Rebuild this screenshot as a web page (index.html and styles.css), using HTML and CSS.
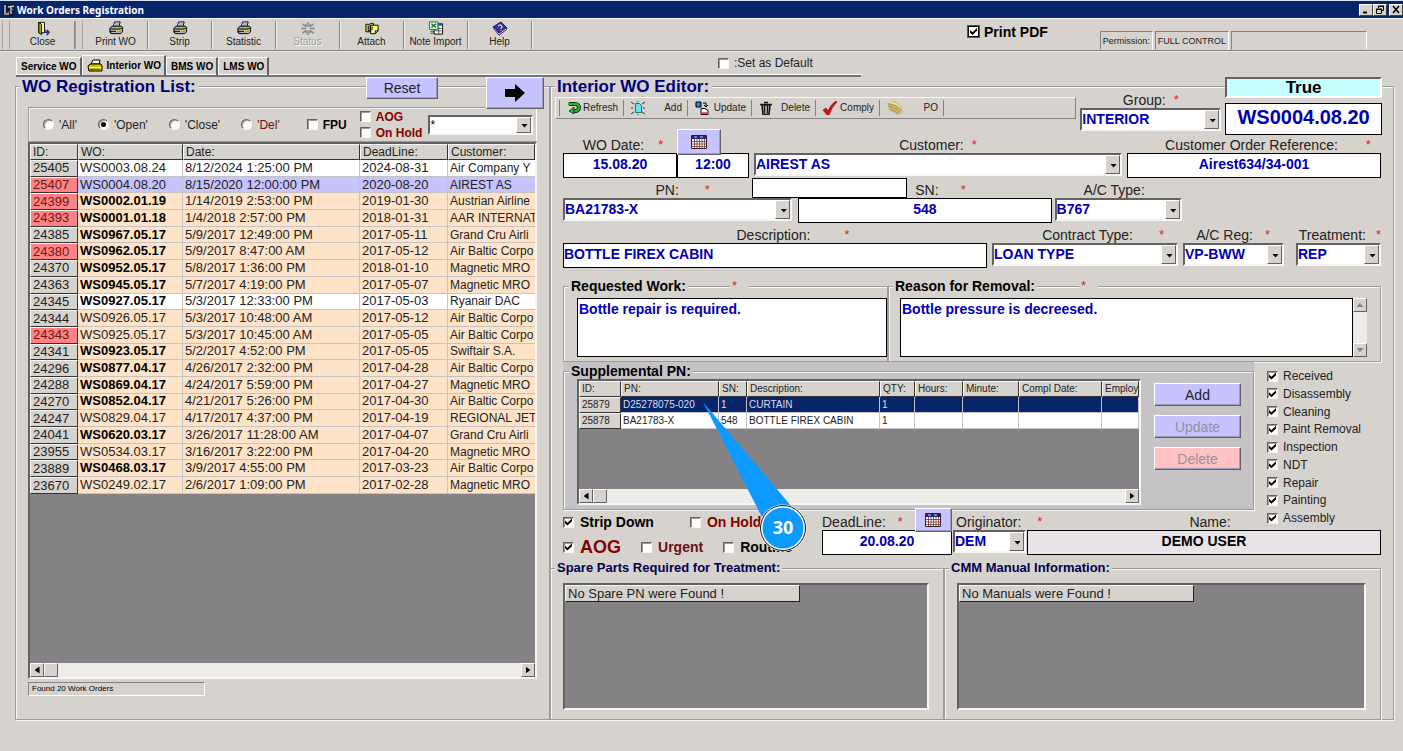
FILE: index.html
```html
<!DOCTYPE html>
<html lang="en">
<head>
<meta charset="utf-8">
<title>Work Orders Registration</title>
<link rel="stylesheet" href="styles.css">
</head>
<body>
<svg class="defs" aria-hidden="true">
  <symbol id="printer" viewBox="0 0 16 16"><path d="M5 6 6.500 1h6L11 6z" fill="#fff" stroke="#000"/><path d="M7 3h4M6.500 4.500h4" stroke="#555" stroke-width=".8"/><path d="M1.500 7.500 4 5.500h10l1 2v4l-2 2h-10l-1.500-1.500z" fill="#b5b2ad" stroke="#000"/><path d="M2 8.500h11l1.500-1.500M3 13.500 1.500 11h11" fill="none" stroke="#000"/><path d="M8 10h4v1.500H8z" fill="#ee0"/></symbol>
  <symbol id="calendar" viewBox="0 0 16 14"><path d="M.5.500h15v13H.5z" fill="#fff" stroke="#222"/><path d="M1 1h14v3H1z" fill="#22207b"/><path d="M3 2h3M9 2h3" stroke="#ddd"/><path d="M1 6.500h14M1 9h14M1 11.500h14M3.500 4v9M6 4v9M8.500 4v9M11 4v9M13.500 4v9" stroke="#733" stroke-width=".8"/></symbol>
</svg>

<header class="titlebar">
  <svg class="app-icon" viewBox="0 0 14 14"><path d="M1 1h12v12H1z" fill="#10184a"/><path d="M3 2v9h4M6 4l6-1M9 3v8" fill="none" stroke="#c8c8b0" stroke-width="1.500"/><path d="M2 12 12 6" stroke="#7a7a40"/></svg>
  <h1>Work Orders Registration</h1>
  <div class="win-buttons">
    <button aria-label="Minimize"><svg viewBox="0 0 10 9"><path d="M2 7.500h4" stroke="#000" stroke-width="2"/></svg></button>
    <button aria-label="Restore"><svg viewBox="0 0 10 9"><path d="M3.500 3V1.500h5v4H7M1.500 4.500h5v4h-5zM1 4h6M3 1h6" fill="none" stroke="#000"/></svg></button>
    <button class="win-close" aria-label="Close window"><svg viewBox="0 0 10 9"><path d="m2 1 6 7M8 1 2 8" stroke="#000" stroke-width="1.500"/></svg></button>
  </div>
</header>

<nav class="toolbar">
  <span class="grip"></span>
  <button class="tool"><svg viewBox="0 0 16 16"><path d="M3.500 1.500h6v11h-6z" fill="#fff" stroke="#000"/><path d="m3.500 1.500 3 2v11l-3-2z" fill="#b5b200" stroke="#000"/><path d="M10 9v3h3M12 9.500l2.500 2.500L12 15" fill="none" stroke="#22207b" stroke-width="1.500"/></svg>Close</button>
  <span class="grip"></span>
  <button class="tool"><svg><use href="#printer"/></svg>Print WO</button>
  <button class="tool"><svg><use href="#printer"/></svg>Strip</button>
  <button class="tool"><svg><use href="#printer"/></svg>Statistic</button>
  <button class="tool" disabled><svg viewBox="0 0 16 16"><path d="M8 1v5M8 10v5M1 8h5M10 8h5M2 3l4 3M14 3l-4 3M2 13l4-3M14 13l-4-3M6 3v3M10 3v3M6 13v-3M10 13v-3" stroke="#848284" stroke-width="1.400"/></svg>Status</button>
  <button class="tool"><svg viewBox="0 0 16 16"><path d="M1.500 3.500h4l1-1h3v9h-8z" fill="#dd5" stroke="#000"/><path d="M6.500 4.500h8v6l-3 3h-5z" fill="#ff7" stroke="#000"/><path d="M11.500 13.500v-3h3" fill="none" stroke="#000"/><path d="M4 5v5.500h2V4M8 6v4" fill="none" stroke="#000"/></svg>Attach</button>
  <button class="tool"><svg viewBox="0 0 16 16"><path d="M6 3h9v11H6z" fill="#fff" stroke="#000"/><path d="M6 3h9v2H6z" fill="#2850b0"/><path d="M7 8h7M7 10.500h7M11 6v8" stroke="#555"/><path d="M1 1h9v8H1z" fill="#dfd" stroke="#0a7a2a"/><path d="m3 3 5 4M8 3 3 7" stroke="#0a7a2a" stroke-width="1.500"/><path d="M2 11h4M2 13h4" stroke="#0a7a2a"/></svg>Note Import</button>
  <button class="tool"><svg viewBox="0 0 16 16"><path d="m1 6 8-5 6 6-8 6z" fill="#3a30b0" stroke="#18106b"/><path d="m1 6 1 3 5 6 8-6V7l-8 6z" fill="#fff" stroke="#18106b"/><path d="M6 5.500Q8 3 9.500 5T8.500 8M9 9.500v1" fill="none" stroke="#fd3" stroke-width="1.400"/></svg>Help</button>
  <label class="print-pdf"><input type="checkbox" class="flat" checked>Print PDF</label>
  <div class="permission"><span>Permission:</span><span>FULL CONTROL</span><span class="blank"></span></div>
</nav>

<div class="tab-row">
  <div class="tabs" role="tablist">
    <button role="tab">Service WO</button>
    <button role="tab" class="active" aria-selected="true"><svg viewBox="0 0 16 14"><path d="m4 5 2-4h7l-1 4z" fill="#fff" stroke="#000"/><path d="M1 7l2-2h11l1 2v5H2z" fill="#c9c400" stroke="#000"/><path d="M2 8.500h12" stroke="#ff6"/><path d="M3 10.500h10" stroke="#554"/></svg>Interior WO</button>
    <button role="tab">BMS WO</button>
    <button role="tab">LMS WO</button>
  </div>
  <label class="set-default"><input type="checkbox">:Set as Default</label>
</div>

<main class="main">
  <section class="panel list-panel">
    <div class="list-head">
      <h2>WO Registration List:</h2>
      <button class="violet reset">Reset</button>
      <button class="violet go" aria-label="Go"><svg viewBox="0 0 22 20"><path d="M1 6h10V1l10 9-10 9v-5H1z" fill="#000"/></svg></button>
    </div>
    <div class="filters">
      <label><input type="radio" name="state">'All'</label>
      <label><input type="radio" name="state" checked>'Open'</label>
      <label><input type="radio" name="state">'Close'</label>
      <label class="maroon"><input type="radio" name="state">'Del'</label>
      <label class="strong fpu"><input type="checkbox">FPU</label>
      <div class="stack strong red">
        <label><input type="checkbox">AOG</label>
        <label><input type="checkbox">On Hold</label>
      </div>
      <span class="combo filter-combo"><select aria-label="Filter"><option>*</option></select></span>
    </div>
    <div class="sheet list-sheet">
      <div class="sheet-body">
        <table class="orders">
          <colgroup><col class="c-id"><col class="c-wo"><col class="c-date"><col class="c-dead"><col></colgroup>
          <thead><tr><th>ID:</th><th>WO:</th><th>Date:</th><th>DeadLine:</th><th>Customer:</th></tr></thead>
          <tbody>
            <tr class="plain"><th>25405</th><td>WS0003.08.24</td><td>8/12/2024 1:25:00 PM</td><td>2024-08-31</td><td>Air Company Y</td></tr>
            <tr class="current late"><th>25407</th><td>WS0004.08.20</td><td>8/15/2020 12:00:00 PM</td><td>2020-08-20</td><td>AIREST AS</td></tr>
            <tr class="bold late"><th>24399</th><td>WS0002.01.19</td><td>1/14/2019 2:53:00 PM</td><td>2019-01-30</td><td>Austrian Airline</td></tr>
            <tr class="bold late"><th>24393</th><td>WS0001.01.18</td><td>1/4/2018 2:57:00 PM</td><td>2018-01-31</td><td>AAR INTERNAT</td></tr>
            <tr class="bold"><th>24385</th><td>WS0967.05.17</td><td>5/9/2017 12:49:00 PM</td><td>2017-05-11</td><td>Grand Cru Airli</td></tr>
            <tr class="bold late"><th>24380</th><td>WS0962.05.17</td><td>5/9/2017 8:47:00 AM</td><td>2017-05-12</td><td>Air Baltic Corpo</td></tr>
            <tr class="bold"><th>24370</th><td>WS0952.05.17</td><td>5/8/2017 1:36:00 PM</td><td>2018-01-10</td><td>Magnetic MRO</td></tr>
            <tr class="bold"><th>24363</th><td>WS0945.05.17</td><td>5/7/2017 4:19:00 PM</td><td>2017-05-07</td><td>Magnetic MRO</td></tr>
            <tr class="bold plain"><th>24345</th><td>WS0927.05.17</td><td>5/3/2017 12:33:00 PM</td><td>2017-05-03</td><td>Ryanair DAC</td></tr>
            <tr><th>24344</th><td>WS0926.05.17</td><td>5/3/2017 10:48:00 AM</td><td>2017-05-12</td><td>Air Baltic Corpo</td></tr>
            <tr class="late"><th>24343</th><td>WS0925.05.17</td><td>5/3/2017 10:45:00 AM</td><td>2017-05-05</td><td>Air Baltic Corpo</td></tr>
            <tr class="bold"><th>24341</th><td>WS0923.05.17</td><td>5/2/2017 4:52:00 PM</td><td>2017-05-05</td><td>Swiftair S.A.</td></tr>
            <tr class="bold"><th>24296</th><td>WS0877.04.17</td><td>4/26/2017 2:32:00 PM</td><td>2017-04-28</td><td>Air Baltic Corpo</td></tr>
            <tr class="bold"><th>24288</th><td>WS0869.04.17</td><td>4/24/2017 5:59:00 PM</td><td>2017-04-27</td><td>Magnetic MRO</td></tr>
            <tr class="bold"><th>24270</th><td>WS0852.04.17</td><td>4/21/2017 5:26:00 PM</td><td>2017-04-30</td><td>Air Baltic Corpo</td></tr>
            <tr><th>24247</th><td>WS0829.04.17</td><td>4/17/2017 4:37:00 PM</td><td>2017-04-19</td><td>REGIONAL JET</td></tr>
            <tr class="bold"><th>24041</th><td>WS0620.03.17</td><td>3/26/2017 11:28:00 AM</td><td>2017-04-07</td><td>Grand Cru Airli</td></tr>
            <tr><th>23955</th><td>WS0534.03.17</td><td>3/16/2017 3:22:00 PM</td><td>2017-04-20</td><td>Magnetic MRO</td></tr>
            <tr class="bold"><th>23889</th><td>WS0468.03.17</td><td>3/9/2017 4:55:00 PM</td><td>2017-03-23</td><td>Air Baltic Corpo</td></tr>
            <tr><th>23670</th><td>WS0249.02.17</td><td>2/6/2017 1:09:00 PM</td><td>2017-02-28</td><td>Magnetic MRO</td></tr>
          </tbody>
        </table>
      </div>
      <div class="hscroll"><button class="arrow left" aria-label="Scroll left"></button><span class="thumb"></span><button class="arrow right" aria-label="Scroll right"></button></div>
    </div>
    <div class="found">Found 20 Work Orders</div>
  </section>

  <section class="panel editor">
    <div class="editor-top">
      <div>
        <h2>Interior WO Editor:</h2>
        <div class="mini-bar">
          <span class="mini-grip"></span>
          <button><svg viewBox="0 0 14 14"><path d="M2 3h6a4 3.500 0 0 1 0 7H6" fill="none" stroke="#111" stroke-width="4"/><path d="M1 3h7a4 3.500 0 0 1 0 7H6" fill="none" stroke="#2b2" stroke-width="2.500"/><path d="m7 6-5 4 5 3z" fill="#2b2" stroke="#111" stroke-width=".7"/></svg><span>Refresh</span></button>
          <button><svg viewBox="0 0 14 14"><path d="M4.500 2.500h4l2 2v7h-6z" fill="#5fe6ee" stroke="#187080"/><path d="M0 1l3 2M14 1l-3 2M0 13l3-2M14 13l-3-2M0 7h2M12 7h2M7 0v1M7 13v1" stroke="#333"/></svg><span>Add</span></button>
          <button><svg viewBox="0 0 14 14"><path d="M1 1h5v5H1z" fill="#28d" stroke="#000"/><path d="M8 2h3v3M9 4l2 2 2-2" fill="none" stroke="#000"/><path d="M6 7.500h4l3 2v4H6z" fill="#fff" stroke="#000"/><path d="M7 12h5" stroke="#d22" stroke-width="1.500"/></svg><span>Update</span></button>
          <button><svg viewBox="0 0 14 14"><path d="M3 4h8l-1 9.500H4zM1 3.500h12M5 1.500h4" fill="#999" stroke="#111" stroke-width="1.500"/><path d="M5.500 5v7M8.500 5v7" stroke="#111"/></svg><span>Delete</span></button>
          <button><svg viewBox="0 0 14 14"><path d="M0 9 3 7l2 3Q8 3 13 0L14 1Q9 6 6 14H4z" fill="#d01018" stroke="#700" stroke-width=".5"/></svg><span>Comply</span></button>
          <button><svg class="wide" viewBox="0 0 16 14"><path d="m0 2 8-2 7 6v6l-4 2-9-5z" fill="#d8b468"/><path d="m1 3 8 2 5 4M1 5l8 3 4 3M3 8l8 4" fill="none" stroke="#7f9c56" stroke-width=".8"/><path d="m2 1 7 2 5 4" fill="none" stroke="#f2dc9c" stroke-width="1.500"/></svg><span>PO</span></button>
        </div>
      </div>
      <div class="field group-field">
        <div class="cap"><label for="group">Group:</label><i>*</i></div>
        <span class="combo"><select id="group"><option>INTERIOR</option></select></span>
      </div>
      <div class="wo-id">
        <output class="true-flag">True</output>
        <input class="wo-number" aria-label="Work order number" value="WS0004.08.20">
      </div>
    </div>

    <form class="form">
      <div class="row row-1">
        <div class="field">
          <div class="cap date-cap"><label for="wodate">WO Date:</label><i>*</i></div>
          <input id="wodate" value="15.08.20">
        </div>
        <div class="field time-field">
          <div class="cap left-cap"><button type="button" class="violet cal" aria-label="Pick date"><svg><use href="#calendar"/></svg></button></div>
          <input aria-label="WO time" value="12:00">
        </div>
        <div class="field gap-left">
          <div class="cap"><label for="customer">Customer:</label><i>*</i></div>
          <span class="combo"><select id="customer"><option>AIREST AS</option></select></span>
        </div>
        <div class="field gap-left">
          <div class="cap ref-cap"><label for="ref">Customer Order Reference:</label><i>*</i></div>
          <input id="ref" value="Airest634/34-001">
        </div>
      </div>
      <div class="row row-2">
        <div class="field">
          <div class="cap far pn-cap"><label for="pn">PN:</label><i>*</i></div>
          <span class="combo"><select id="pn"><option>BA21783-X</option></select></span>
        </div>
        <div class="field">
          <div class="cap sn-cap"><input class="pn-find" aria-label="Find part number"><label for="sn">SN:</label><i>*</i></div>
          <input id="sn" value="548">
        </div>
        <div class="field">
          <div class="cap type-cap"><label for="actype">A/C Type:</label></div>
          <span class="combo"><select id="actype"><option>B767</option></select></span>
        </div>
      </div>
      <div class="row row-3">
        <div class="field">
          <div class="cap desc-cap"><label for="desc">Description:</label><i>*</i></div>
          <input id="desc" class="start" value="BOTTLE FIREX CABIN">
        </div>
        <div class="field">
          <div class="cap far end"><label for="contract">Contract Type:</label><i>*</i></div>
          <span class="combo"><select id="contract"><option>LOAN TYPE</option></select></span>
        </div>
        <div class="field">
          <div class="cap mid end"><label for="reg">A/C Reg:</label><i>*</i></div>
          <span class="combo"><select id="reg"><option>VP-BWW</option></select></span>
        </div>
        <div class="field treat">
          <div class="cap mid end"><label for="treat">Treatment:</label><i>*</i></div>
          <span class="combo"><select id="treat"><option>REP</option></select></span>
        </div>
      </div>

      <div class="notes">
        <div class="box requested">
          <div class="box-title"><label for="work">Requested Work:</label><i>*</i></div>
          <textarea id="work">Bottle repair is required.</textarea>
        </div>
        <div class="box reason">
          <div class="box-title"><label for="why">Reason for Removal:</label><i>*</i></div>
          <div class="scrolled">
            <textarea id="why">Bottle pressure is decreesed.</textarea>
            <div class="vscroll"><button type="button" class="arrow up" aria-label="Scroll up"></button><button type="button" class="arrow down" aria-label="Scroll down"></button></div>
          </div>
        </div>
      </div>

      <div class="supp-row">
        <div class="box supp">
          <div class="box-title"><span>Supplemental PN:</span></div>
          <div class="supp-body">
            <div class="sheet">
              <div class="sheet-body">
                <table class="parts">
                  <colgroup><col class="p-id"><col class="p-pn"><col class="p-sn"><col class="p-desc"><col class="p-qty"><col class="p-h"><col class="p-m"><col class="p-date"><col></colgroup>
                  <thead><tr><th>ID:</th><th>PN:</th><th>SN:</th><th>Description:</th><th>QTY:</th><th>Hours:</th><th>Minute:</th><th>Compl Date:</th><th>Employ</th></tr></thead>
                  <tbody>
                    <tr class="picked"><th>25879</th><td>D25278075-020</td><td>1</td><td>CURTAIN</td><td>1</td><td></td><td></td><td></td><td></td></tr>
                    <tr><th>25878</th><td>BA21783-X</td><td>548</td><td>BOTTLE FIREX CABIN</td><td>1</td><td></td><td></td><td></td><td></td></tr>
                  </tbody>
                </table>
              </div>
              <div class="hscroll"><button type="button" class="arrow left" aria-label="Scroll left"></button><span class="thumb"></span><button type="button" class="arrow right" aria-label="Scroll right"></button></div>
            </div>
            <div class="supp-buttons">
              <button type="button" class="violet">Add</button>
              <button type="button" class="violet" disabled>Update</button>
              <button type="button" class="violet pink" disabled>Delete</button>
            </div>
          </div>
        </div>
        <div class="stages">
          <label><input type="checkbox" checked>Received</label>
          <label><input type="checkbox" checked>Disassembly</label>
          <label><input type="checkbox" checked>Cleaning</label>
          <label><input type="checkbox" checked>Paint Removal</label>
          <label><input type="checkbox" checked>Inspection</label>
          <label><input type="checkbox" checked>NDT</label>
          <label><input type="checkbox" checked>Repair</label>
          <label><input type="checkbox" checked>Painting</label>
          <label><input type="checkbox" checked>Assembly</label>
        </div>
      </div>

      <div class="row row-4">
        <div class="flags">
          <div class="flag-line first"><label><input type="checkbox" checked>Strip Down</label><label class="red"><input type="checkbox">On Hold</label></div>
          <div class="flag-line"><label class="red big"><input type="checkbox" checked>AOG</label><label class="maroon"><input type="checkbox">Urgent</label><label><input type="checkbox">Routine</label></div>
        </div>
        <div class="field">
          <div class="cap dead-cap"><label for="dead">DeadLine:</label><i>*</i><button type="button" class="violet cal small" aria-label="Pick deadline"><svg><use href="#calendar"/></svg></button></div>
          <input id="dead" value="20.08.20">
        </div>
        <div class="field">
          <div class="cap orig-cap"><label for="orig">Originator:</label><i>*</i></div>
          <span class="combo"><select id="orig"><option>DEM</option></select></span>
        </div>
        <div class="field">
          <div class="cap name-cap"><label for="name">Name:</label></div>
          <input id="name" class="readonly" value="DEMO USER" readonly>
        </div>
      </div>
    </form>

    <div class="bottom">
      <div class="box info spare">
        <div class="box-title"><span>Spare Parts Required for Treatment:</span></div>
        <div class="empty"><span>No Spare PN were Found !</span></div>
      </div>
      <div class="box info manuals">
        <div class="box-title"><span>CMM Manual Information:</span></div>
        <div class="empty"><span>No Manuals were Found !</span></div>
      </div>
    </div>

    <svg class="callout" viewBox="0 0 110 154"><path d="M3 3 92 108 64 122z" fill="#0c9aff"/><circle cx="83" cy="129" r="22" fill="#0c9aff" stroke="#fff" stroke-width="3"/><circle cx="83" cy="129" r="22.500" fill="none" stroke="#111"/><text x="83" y="135" text-anchor="middle">30</text></svg>
  </section>
</main>
</body>
</html>
```

FILE: styles.css
```css
* { box-sizing: border-box; }

:root {
  --face: #d6d3ce;
  --dark: #848284;
  --ink: #424142;
  --navy: #08246b;
  --blue: #0000b5;
}

body {
  margin: 0;
  min-height: 100vh;
  display: flex;
  flex-direction: column;
  background: var(--face);
  color: #222;
  font: 13px/16px "Liberation Sans", Arial, sans-serif;
}

h1, h2, p { margin: 0; }
button, input, select, textarea { font: inherit; color: inherit; border-radius: 0; margin: 0; }
button { padding: 0; background: none; border: 0; }
i { font-style: normal; color: #e02020; }
.defs { position: absolute; width: 0; height: 0; }
.red { color: #840000; }
.maroon { color: #6b1010; }

/* Tick boxes and radios */
input[type="checkbox"], input[type="radio"] {
  appearance: none;
  flex: none;
  width: 11px;
  height: 11px;
  background: #fff;
  border: 1px solid;
  border-color: #636163 #f7f7f7 #f7f7f7 #636163;
  box-shadow: inset 1px 1px 0 #9c9a9c;
  display: grid;
  place-content: center;
}
input[type="radio"] { border-radius: 50%; }
input[type="checkbox"]:checked::before {
  content: "";
  width: 7px;
  height: 7px;
  background: #000;
  clip-path: polygon(0 30%, 35% 62%, 100% 0, 100% 38%, 35% 100%, 0 68%);
}
input[type="radio"]:checked::before {
  content: "";
  width: 5px;
  height: 5px;
  border-radius: 50%;
  background: #000;
}
input.flat { border: 1px solid #000; box-shadow: 0 0 0 1px #555; }

/* Title bar */
.titlebar {
  display: flex;
  align-items: center;
  height: 18px;
  padding-left: 2px;
  background: var(--navy);
  border-top: 1px solid #d6e3f7;
}
.app-icon { width: 14px; height: 14px; }
.titlebar h1 {
  flex: 1;
  padding-left: 1px;
  color: #fff;
  font: bold 10px/16px "Noto Sans", Verdana, sans-serif;
}
.win-buttons { display: flex; }
.win-buttons button {
  width: 14px;
  height: 12px;
  display: grid;
  place-items: center;
  background: var(--face);
  border: 1px solid;
  border-color: #fff var(--ink) var(--ink) #fff;
}
.win-buttons .win-close { margin-left: 2px; }
.win-buttons svg { width: 10px; height: 9px; }

/* Main tool bar */
.toolbar {
  display: flex;
  height: 33px;
  padding: 2px 36px 0 2px;
  border-top: 1px solid #f7f7f7;
  border-bottom: 1px solid var(--dark);
  box-shadow: 0 1px 0 #e7e7e3;
  font-size: 10px;
  line-height: 12px;
}
.grip { width: 8px; border: solid #a5a29c; border-width: 0 1px; margin: 0 1px 1px 0; }
.toolbar .tool {
  width: 64px;
  display: flex;
  flex-direction: column;
  align-items: center;
  border-right: 1px solid var(--dark);
  box-shadow: 1px 0 0 #efefef;
  margin-bottom: 1px;
}
.tool svg { width: 16px; height: 15px; }
.tool:disabled { color: #9c9a9c; text-shadow: 1px 1px 0 #fff; }
.print-pdf {
  display: flex;
  align-items: center;
  gap: 5px;
  height: 21px;
  margin: 0 52px 0 auto;
  color: #000;
  font-size: 14px;
  font-weight: bold;
}
.permission { display: flex; gap: 2px; padding-top: 10px; font-size: 9px; }
.permission span {
  padding: 3px 2px 0;
  border: 1px solid;
  border-color: var(--dark) #fff transparent var(--dark);
}
.permission .blank { width: 136px; }

/* Tabs */
.tab-row { display: flex; align-items: flex-start; height: 26px; padding: 4px 0 0 16px; }
.tabs { display: flex; align-items: flex-end; width: 845px; height: 22px; margin-right: -143px; border-bottom: 2px solid #737173; box-shadow: inset 0 -1px 0 #fff; }
.tabs button {
  height: 18px;
  padding: 0 3px 0 4px;
  color: #000;
  font-size: 10px;
  font-weight: bold;
  border: solid;
  border-width: 1px 2px 0 1px;
  border-color: #fff #636163 #fff #fff;
}
.tabs .active { display: flex; align-items: center; gap: 4px; height: 20px; background: var(--face); }
.tabs .active svg { width: 16px; height: 14px; }
.set-default { display: flex; align-items: center; gap: 5px; font-size: 12px; }

/* Panels */
.main { flex: 1; display: grid; grid-template-columns: 535fr 844fr; padding: 0 9px 0 15px; margin-bottom: 31px; }
.panel { position: relative; display: flex; flex-direction: column; min-width: 0; }
.panel::before, .box::before {
  content: "";
  position: absolute;
  inset: 9px 0 0 0;
  border: 1px solid #9c9a9c;
  box-shadow: inset 1px 1px 0 #f7f7f7, 1px 1px 0 #f7f7f7;
  pointer-events: none;
}
.panel > * { position: relative; }
h2 {
  width: max-content;
  padding: 0 3px 0 2px;
  color: #00007b;
  background: var(--face);
  font-size: 17px;
  line-height: 20px;
}

.violet {
  background: #c6c3ff;
  border: 1px solid;
  border-color: #fff #636163 #636163 #fff;
  box-shadow: inset -1px -1px 0 #9c9abd;
  color: #222;
  font-size: 14px;
}
.violet.pink { background: #ffc3c6; }
.violet:disabled { color: #94929c; }

/* List panel */
.list-head { display: flex; align-items: flex-start; height: 30px; padding: 0 6px 0 5px; z-index: 1; }
.reset { width: 72px; height: 22px; margin-left: auto; }
.go { display: grid; place-items: center; width: 58px; height: 32px; margin-left: 48px; }
.go svg { width: 22px; height: 20px; }
.filters {
  display: flex;
  align-items: center;
  gap: 21px;
  height: 35px;
  margin: 0 13px;
  padding: 0 3px 0 14px;
  border: 1px solid #9c9a9c;
  border-right-color: #fff;
  box-shadow: inset 1px 1px 0 #efefef;
  font-size: 12px;
  white-space: nowrap;
}
.filters label { display: flex; align-items: center; gap: 5px; }
.filters .fpu { margin-left: 6px; }
.filters .stack { margin-left: -8px; }
.strong { font-weight: bold; color: #000; }
.strong.red { color: #840000; }
.filter-combo { flex: 1; margin-left: -15px; }
.combo.filter-combo select { height: 20px; font-size: 12px; font-weight: normal; color: #000; }

.sheet {
  flex: 1;
  display: flex;
  flex-direction: column;
  min-width: 0;
  background: var(--dark);
  border: 2px solid;
  border-color: #636163 #f7f7f7 #f7f7f7 #636163;
}
.sheet-body { flex: 1; overflow: hidden; }
.list-sheet { margin: 0 13px; }
table { width: 100%; table-layout: fixed; border-collapse: separate; border-spacing: 0; color: #222; }
th, td { padding: 0 0 0 2px; overflow: hidden; white-space: nowrap; text-align: left; font-weight: normal; }
th { background: var(--face); border: 1px solid; border-color: #f7f7f7 #333 #333 #f7f7f7; }
td { border: solid #c6c3c6; border-width: 0 1px 1px 0; }

.orders { height: 350px; font-size: 13px; line-height: 14px; }
.orders td { background: #ffe3c6; }
.orders .plain td { background: #fff; }
.orders .current td { background: #c6c3ff; }
.orders .late th { background: #ff8284; color: #6b1818; }
.orders .bold td:nth-child(2) { font-weight: bold; color: #000; }
.orders td:last-child, .orders thead th { font-size: 12px; }
.orders td:last-child { border-right: 0; }
.c-id { width: 48px; }
.c-wo { width: 105px; }
.c-date { width: 177px; }
.c-dead { width: 88px; }

.hscroll, .vscroll { display: flex; background: #eeece8; }
.hscroll { height: 14px; }
.arrow, .thumb {
  width: 14px;
  height: 14px;
  background: var(--face);
  border: 1px solid;
  border-color: #fff #636163 #636163 #fff;
  display: grid;
  place-items: center;
}
.arrow::before { content: ""; width: 5px; height: 7px; background: #000; }
.arrow.left::before { clip-path: polygon(100% 0, 100% 100%, 0 50%); }
.arrow.right::before { clip-path: polygon(0 0, 0 100%, 100% 50%); }
.arrow.up::before, .arrow.down::before { width: 7px; height: 4px; background: var(--dark); }
.arrow.up::before { clip-path: polygon(0 100%, 100% 100%, 50% 0); }
.arrow.down::before { clip-path: polygon(0 0, 100% 0, 50% 100%); }
.arrow.right { margin-left: auto; }
.vscroll { flex-direction: column; justify-content: space-between; width: 14px; }

.found {
  width: 177px;
  height: 14px;
  margin: 3px 0 24px 13px;
  padding-left: 3px;
  border: 1px solid;
  border-color: var(--dark) #fff #fff var(--dark);
  color: #000;
  font-size: 8px;
  line-height: 12px;
}

/* Editor head */
.editor-top { display: grid; grid-template-columns: 522fr 141fr 157fr; gap: 4px; padding: 0 12px 0 5px; margin-bottom: -2px; z-index: 1; }
.mini-bar {
  display: flex;
  height: 22px;
  padding: 2px 0;
  border: 1px solid;
  border-color: #f7f7f7 var(--dark) var(--dark) #f7f7f7;
  font-size: 10px;
}
.mini-grip { width: 4px; border-right: 1px solid var(--dark); }
.mini-bar button {
  width: 64px;
  display: flex;
  align-items: center;
  justify-content: space-between;
  padding: 0 5px 0 7px;
  border-right: 1px solid var(--dark);
}
.mini-bar svg { flex: none; width: 14px; height: 14px; }
.mini-bar svg.wide { width: 16px; }
.group-field { padding-top: 11px; }
.true-flag {
  display: block;
  height: 21px;
  background: #c6ffff;
  border: 2px solid;
  border-color: #636163 #fff #fff #636163;
  color: #000;
  font-size: 17px;
  font-weight: bold;
  line-height: 18px;
  text-align: center;
}
.wo-id .wo-number {
  display: block;
  width: 100%;
  height: 32px;
  margin-top: 5px;
  padding: 0 0 4px;
  border: 1px solid #000;
  background: #fff;
  color: var(--blue);
  font-size: 20px;
  font-weight: bold;
  text-align: center;
}

/* Form */
.form { padding: 0 13px; }
.row { display: grid; }
.row-1 { grid-template-columns: 114fr 72fr 373fr 259fr; }
.row-2 { grid-template-columns: 229fr 256fr 127fr 196fr; column-gap: 3px; }
.row-2 .field:nth-child(2) { padding-left: 3px; }
.row-3 { grid-template-columns: 424fr 186fr 101fr 92fr; column-gap: 5px; }
.row-4 { grid-template-columns: 258fr 130fr 73fr 354fr; column-gap: 1px; }
.treat { padding-left: 7px; }
.gap-left { padding-left: 5px; }
.field { min-width: 0; display: flex; flex-direction: column; }
.cap { display: flex; align-items: flex-end; justify-content: center; gap: 8px; height: 20px; font-size: 14px; line-height: 16px; white-space: nowrap; }
.cap i, .box-title i { font-size: 13px; }
.far { gap: 26px; }
.mid { gap: 12px; }
.pn-cap { padding-left: 10px; }
.type-cap { padding-right: 8px; }
.name-cap { padding-left: 12px; }
.end { justify-content: flex-end; }
.cap.end { padding-right: 14px; }
.treat .cap.end { gap: 10px; padding-right: 0; }
.date-cap { gap: 14px; padding-left: 6px; }
.ref-cap { gap: 28px; padding-left: 28px; }
.desc-cap { gap: 34px; padding-left: 36px; }
.left-cap { justify-content: flex-start; }
.sn-cap { justify-content: flex-start; gap: 22px; margin-left: -46px; }
.sn-cap label { margin-left: -14px; }
.dead-cap { justify-content: flex-end; gap: 12px; }
.orig-cap { justify-content: flex-start; gap: 16px; padding-left: 3px; }
.field > input, .pn-find {
  width: 100%;
  height: 25px;
  padding: 0 0 4px;
  background: #fff;
  border: 1px solid #000;
  color: var(--blue);
  font-size: 14px;
  font-weight: bold;
  text-align: center;
}
.field > input.start { text-align: left; }
.field > input.readonly { background: #e7e3e7; color: #000; }
.sn-cap .pn-find { width: 155px; height: 20px; }
.cal { display: grid; place-items: center; width: 44px; height: 26px; margin-bottom: -2px; z-index: 1; }
.cal.small { width: 38px; height: 24px; }
.cal svg { width: 16px; height: 14px; }

.combo { position: relative; display: block; }
.combo select {
  appearance: none;
  width: 100%;
  height: 23px;
  padding: 0 16px 2px 0;
  background: #fff;
  border: 2px solid;
  border-color: #636163 #f7f7f7 #f7f7f7 #636163;
  color: var(--blue);
  font-size: 14px;
  font-weight: bold;
}
.combo::before {
  content: "";
  position: absolute;
  inset: 2px 2px 2px auto;
  width: 13px;
  background: var(--face);
  border: 1px solid;
  border-color: #fff #636163 #636163 #fff;
  pointer-events: none;
}
.combo::after {
  content: "";
  position: absolute;
  right: 5px;
  top: calc(50% - 1px);
  width: 7px;
  height: 4px;
  background: #000;
  clip-path: polygon(0 0, 100% 0, 50% 100%);
  pointer-events: none;
}

/* Framed groups */
.box { position: relative; min-width: 0; }
.box > * { position: relative; }
.box-title { display: flex; align-items: center; height: 17px; padding-left: 6px; color: #000; font-size: 14px; font-weight: bold; }
.box-title > * { padding: 0 2px; background: var(--face); }
.notes { display: grid; grid-template-columns: 325fr 493fr; margin-top: 9px; }
.box-title i { margin-left: 42px; padding-right: 12px; font-weight: normal; }
.requested { padding: 0 1px 5px 14px; }
.reason { padding: 0 14px 5px 12px; }
.requested .box-title { margin-left: -14px; }
.reason .box-title { margin-left: -13px; }
textarea {
  display: block;
  width: 100%;
  height: 59px;
  margin-top: 4px;
  padding: 2px 1px;
  resize: none;
  overflow: hidden;
  background: #fff;
  border: 1px solid #000;
  color: var(--blue);
  font-size: 14px;
  font-weight: bold;
  line-height: 16px;
}
.scrolled { display: flex; }
.scrolled .vscroll { flex: none; margin-top: 4px; }

.supp-row { display: grid; grid-template-columns: 691fr 114fr; gap: 13px; }
.supp { background: #c6c3c6; padding: 0 13px 5px 14px; }
.supp .box-title { margin-left: -14px; }
.supp .box-title > * { background: #c6c3c6; }
.supp-body { display: flex; gap: 13px; }
.supp-body .sheet { height: 126px; }
.supp-buttons { display: flex; flex-direction: column; gap: 9px; width: 87px; padding-top: 4px; }
.supp-buttons button { height: 23px; }
.parts { font-size: 10px; line-height: 14px; }
.parts td { background: #fff; }
.parts .picked td { background: var(--navy); color: #dde; }
.p-id { width: 42px; }
.p-pn { width: 98px; }
.p-sn { width: 28px; }
.p-desc { width: 133px; }
.p-qty { width: 35px; }
.p-h { width: 48px; }
.p-m { width: 56px; }
.p-date { width: 83px; }
.stages { display: flex; flex-direction: column; justify-content: space-between; margin: 6px 0 -16px; font-size: 12px; white-space: nowrap; }
.stages label { display: flex; align-items: center; gap: 5px; }

.flags { padding-top: 3px; color: #000; font-size: 14px; font-weight: bold; }
.flag-line { display: flex; align-items: center; gap: 20px; height: 24px; margin-top: 4px; margin-bottom: -4px; }
.flag-line.first { gap: 36px; height: 18px; margin: 0; }
.flag-line label { display: flex; align-items: center; gap: 6px; }
.flag-line .red { color: #840000; }
.flag-line .maroon { color: #6b1010; }
.flag-line .big { font-size: 18px; }

/* Lower groups */
.bottom { flex: 1; display: grid; grid-template-columns: 394fr 437fr; margin: 4px 13px 0 0; }
.info { display: flex; flex-direction: column; padding: 0 15px 10px 13px; }
.info .box-title { margin-left: -8px; padding-left: 0; color: #00004a; font-size: 13px; white-space: nowrap; }
.empty {
  flex: 1;
  margin-top: 7px;
  background: var(--dark);
  border: 2px solid;
  border-color: #636163 #f7f7f7 #f7f7f7 #636163;
}
.empty span {
  display: block;
  width: 235px;
  height: 17px;
  padding-left: 2px;
  background: var(--face);
  border: 1px solid;
  border-color: #f7f7f7 #222 #222 #f7f7f7;
  font-size: 13px;
  line-height: 15px;
}

/* Step marker pointing at the selected part */
.panel > .callout { position: absolute; left: 150px; top: 322px; width: 110px; height: 154px; pointer-events: none; }
.callout text { fill: #fff; font: bold 18px "Open Sans", sans-serif; }
```
